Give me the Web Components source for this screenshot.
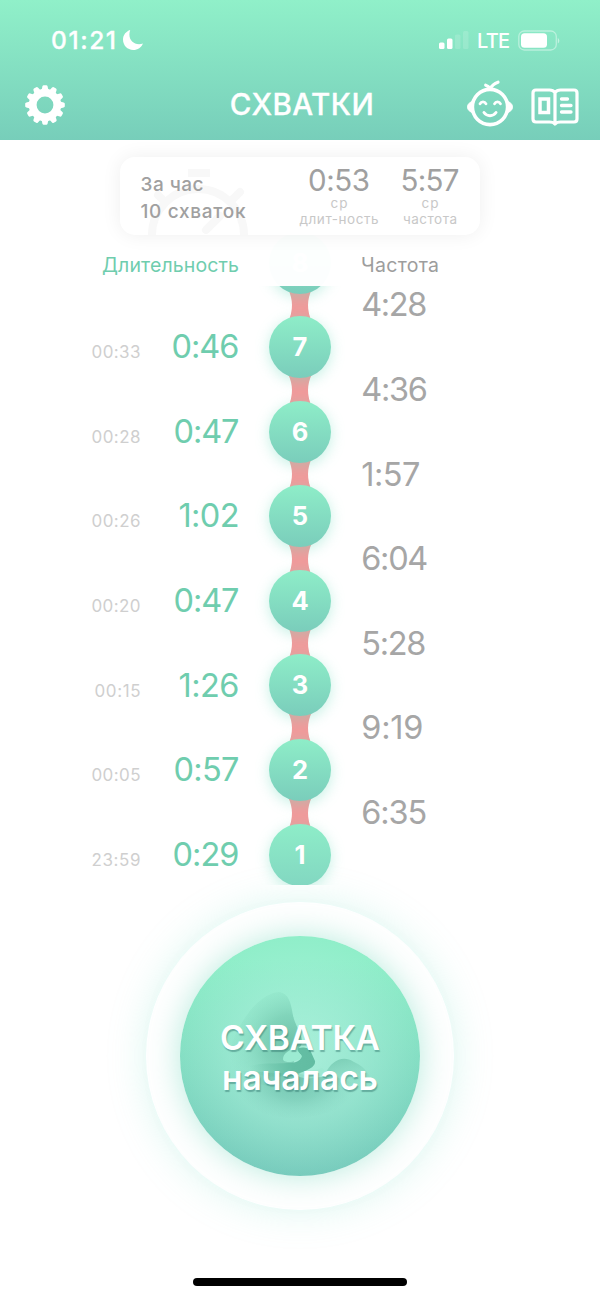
<!DOCTYPE html>
<html lang="ru">
<head>
<meta charset="utf-8">
<title>Схватки</title>
<style>
html,body{margin:0;background:#fff}
body{font-family:Inter,"Liberation Sans",sans-serif;width:600px;height:1297px;overflow:hidden}
</style>
</head>
<body>
<contraction-app></contraction-app>
<script>
const define = (name, html, setup) => {
  const tpl = document.createElement('template');
  tpl.innerHTML = html;
  customElements.define(name, class extends HTMLElement {
    constructor() {
      super();
      this.attachShadow({ mode: 'open' }).append(tpl.content.cloneNode(true));
    }
    connectedCallback() { if (setup) setup(this, this.shadowRoot); }
  });
};

/* Text whose tracking is adjusted to occupy a given width */
define('fit-text', `<style>:host{display:inline-block;white-space:nowrap}span{display:inline-block}</style><span><slot></slot></span>`,
  (host, root) => {
    const w = parseFloat(host.getAttribute('w'));
    const span = root.querySelector('span');
    const n = host.textContent.length;
    const gap = (w - span.getBoundingClientRect().width) / (n - 1);
    span.style.letterSpacing = gap + 'px';
    span.style.marginRight = -gap + 'px';
  });

define('status-bar', `<style>
:host{display:flex;justify-content:space-between;align-items:center;height:80px;padding:0 40px 0 51px;box-sizing:border-box;color:#fff}
div{display:flex;align-items:center}
.clock{font-size:24.500px;font-weight:500;line-height:30px;-webkit-text-stroke:.3px #fff}
.lte{font-size:20px;font-weight:500;line-height:24px;padding-top:1px}
</style>
<div><fit-text class="clock" w="65">01:21</fit-text>
<svg width="22" height="22" viewBox="0 0 22 22" style="margin-left:6px"><path d="M8.2 1C4 2.3 1 6 1 10.6 1 16.500 5.500 21 11.200 21c4.600 0 8.200-2.600 9.700-6.500-1.200.5-2.500.7-3.800.7C11.500 15.200 7.400 11.300 7.400 5.600c0-1.700.3-3.300.8-4.600z" fill="#fff"/></svg></div>
<div><svg width="30" height="20" viewBox="0 0 30 20" fill="#fff"><rect y="12.500" width="5.500" height="6.500" rx="1.500"/><rect x="8" y="8.500" width="5.500" height="10.500" rx="1.500"/><rect x="16" y="4.500" width="5.500" height="14.500" rx="1.500" opacity=".15"/><rect x="24" y="1" width="5.500" height="18" rx="1.500" opacity=".15"/></svg>
<fit-text class="lte" w="33" style="margin:0 8px 0 8px">LTE</fit-text>
<svg width="42" height="21" viewBox="0 0 42 21"><rect x=".8" y="1" width="37.500" height="19" rx="5.500" fill="none" stroke="#fff" stroke-opacity=".42" stroke-width="1.300"/><rect x="3" y="3.300" width="26" height="14.400" rx="3.500" fill="#fff"/><path d="M39.800 8v5.500c2-1 2-4.500 0-5.500z" fill="#fff" opacity=".5"/></svg></div>`);

define('gear-icon', `<style>:host{display:block;width:40px;height:40px}svg{display:block}</style>
<svg width="40" height="40" viewBox="-20 -20 40 40"><g fill="#fff"></g><circle r="12.300" fill="none" stroke="#fff" stroke-width="7.800"/></svg>`,
  (host, root) => {
    let s = '';
    for (let i = 0; i < 12; i++) s += `<path d="M-3.400-15L-2.600-18.600Q-2.300-19.800-1.300-19.800H1.300Q2.300-19.800 2.600-18.600L3.400-15Z" transform="rotate(${i * 30})"/>`;
    root.querySelector('g').innerHTML = s;
  });

define('baby-icon', `<style>:host{display:block}svg{display:block}</style>
<svg width="46" height="48" viewBox="0 0 46 48" fill="none" stroke="#fff" stroke-linecap="round" stroke-linejoin="round">
<circle cx="23" cy="27" r="17.600" stroke-width="3.600"/>
<path d="M5 21.500C1.500 23 .5 25 .5 27s1 4 4.500 5.500zM41 21.500c3.500 1.500 4.500 3.500 4.500 5.500s-1 4-4.500 5.500z" fill="#fff"/>
<path d="M23 9C24.500 6 27 3.500 31 2.200M23 8.500C21.800 6.500 20.500 5.700 18.700 5.200" stroke-width="3.200"/>
<path d="M13 23.800c1.300-2.600 4.700-2.600 6 0M27.500 23.800c1.300-2.600 4.700-2.600 6 0" stroke-width="2.800"/>
<path d="M17 32.500c3 4.200 9 4.200 12 0" stroke-width="3"/></svg>`);

define('book-icon', `<style>:host{display:block}svg{display:block}</style>
<svg width="48" height="38" viewBox="0 0 48 38" fill="none" stroke="#fff" stroke-linecap="round" stroke-linejoin="round">
<path d="M24 4.500C22.500 2.500 20.500 2 18.500 2H5Q2 2 2 5v26q0 3 3 3h13.500c2.500 0 4.500.6 5.500 2 1-1.400 3-2 5.500-2H43q3 0 3-3V5q0-3-3-3H29.500C27.500 2 25.500 2.500 24 4.500V35" stroke-width="3.200"/>
<rect x="9" y="11" width="8.500" height="13.500" stroke-width="3.500" stroke-linejoin="miter"/>
<path d="M30.500 11h6M30.500 17.500h9.500M30.500 24h9.500" stroke-width="3.300"/></svg>`);

define('nav-bar', `<style>
:host{display:grid;grid-template-columns:1fr auto 1fr;align-items:start;height:60px;padding:0 21px 0 24.500px;box-sizing:border-box;color:#fff}
h1{margin:6px 0 0;font-size:29.500px;line-height:36px;font-weight:500;-webkit-text-stroke:.3px #fff}
.right{display:flex;justify-content:flex-end;gap:18px}
gear-icon{margin-top:5px}book-icon{margin-top:7.500px}
</style><gear-icon></gear-icon><h1><fit-text w="144">СХВАТКИ</fit-text></h1><div class="right"><baby-icon></baby-icon><book-icon></book-icon></div>`);

define('summary-card', `<style>
:host{position:relative;display:flex;width:360px;height:78px;margin:17px auto 0;border-radius:15px;background:#fff;box-shadow:0 0 20px rgba(0,0,0,.065);color:#a0a0a0}
.watch{position:absolute;left:24px;top:10px}
.total{position:relative;width:176px;padding:14px 0 0 20.500px;box-sizing:border-box;font-size:19px;line-height:27px;font-weight:500}
.total fit-text{display:block}
.stat{position:relative;display:flex;flex-direction:column;align-items:center;padding-top:8px}
.num{font-size:29.500px;line-height:31px;font-weight:400}
.cap{font-size:13.500px;line-height:16px;color:#c8c8c8}
.cap.a{line-height:15px}
.d{width:86px}.f{width:96px}
</style>
<svg class="watch" width="112" height="68" viewBox="0 0 112 68" fill="none" stroke="#f8f8f8" stroke-width="8" stroke-linecap="round"><path d="M44 6h22" stroke-linecap="butt"/><path d="M8 68A44 44 0 0 1 100 68M18 32l-4-4M86 35l10-10M62 63l14-14"/></svg>
<div class="total"><fit-text w="63">За час</fit-text><fit-text w="105">10 схваток</fit-text></div>
<div class="stat d"><fit-text class="num" w="62">0:53</fit-text><fit-text class="cap a" w="17">ср</fit-text><fit-text class="cap" w="79">длит-ность</fit-text></div>
<div class="stat f"><fit-text class="num" w="59">5:57</fit-text><fit-text class="cap a" w="17">ср</fit-text><fit-text class="cap" w="54">частота</fit-text></div>`);

define('column-heads', `<style>
:host{display:grid;grid-template-columns:239px 121px 1fr;height:51px;padding-top:4px;box-sizing:border-box;background:rgba(255,255,255,.975);font-size:19.500px;line-height:52px}
.l{justify-self:end;color:#6fcdae}.r{grid-column:3;color:#9d9d9d;padding-left:1px}
</style><fit-text class="l" w="137">Длительность</fit-text><fit-text class="r" w="78">Частота</fit-text>`);

define('duration-row', `<style>
:host{display:grid;grid-template-columns:140.500px 99px;height:84.600px;align-items:baseline;line-height:84.600px;text-align:right}
.s{font-size:17px;color:#cfcfcf}.t{font-size:32.500px;color:#6fcdae}
</style><div class="s"></div><div class="t"></div>`,
  (h, r) => {
    const [stamp, time, w, sw] = h.getAttribute('value').split(' ');
    r.querySelector('.s').innerHTML = `<fit-text w="${sw}">${stamp}</fit-text>`;
    r.querySelector('.t').innerHTML = `<fit-text w="${w}">${time}</fit-text>`;
  });

define('count-node', `<style>
:host{display:flex;flex-direction:column;align-items:center;height:84.600px}
.ball{position:relative;z-index:1;width:62px;height:62px;flex:none;border-radius:50%;background:linear-gradient(#8eedc8,#7acdbb);box-shadow:0 3px 14px rgba(112,220,190,.4);color:#fff;font-size:25.500px;font-weight:700;line-height:61px;text-align:center}
svg{display:block;flex:none;margin-top:-4.500px}
:host([last]) svg{display:none}
:host([last]) .ball{background:linear-gradient(#8eedc8,#82d7c1)}
</style><div class="ball"><slot></slot></div>
<svg width="28" height="33" viewBox="0 0 28 33"><path d="M2 0Q10 16 2 33H26Q18 16 26 0Z" fill="#f29a9b"/></svg>`);

define('contraction-list', `<style>
:host{display:grid;grid-template-columns:240px 120px 1fr;height:650px;overflow:hidden;align-items:start;box-sizing:border-box}
.mid{margin-top:-3.500px}
.left{padding-top:70.200px}
.right{padding-top:28.400px;font-size:32.500px;line-height:84.600px;color:#a6a6a6}
.right fit-text{display:block;margin-left:1.300px}
</style><div class="left"></div><div class="mid"></div><div class="right"></div>`,
  (h, r) => {
    r.querySelector('.left').innerHTML = [['00:33','0:46',68,49],['00:28','0:47',66,49],['00:26','1:02',61,49],['00:20','0:47',66,49],['00:15','1:26',61,46],['00:05','0:57',66,49],['23:59','0:29',67,49]]
      .map(v => `<duration-row value="${v.join(' ')}"></duration-row>`).join('');
    r.querySelector('.mid').innerHTML = [8,7,6,5,4,3,2,1].map(n => `<count-node${n === 1 ? ' last' : ''}>${n}</count-node>`).join('');
    r.querySelector('.right').innerHTML = [['4:28',66],['4:36',66.5],['1:57',59],['6:04',67],['5:28',65],['9:19',62],['6:35',66]]
      .map(([t, w]) => `<fit-text w="${w}">${t}</fit-text>`).join('');
  });

define('start-button', `<style>
:host{display:grid;place-items:center;width:308px;height:308px;margin:17px auto 0;border-radius:50%;background:#fff;box-shadow:0 0 38px rgba(126,228,200,.28)}
.disc{display:grid;width:240px;height:240px;border-radius:50%;overflow:hidden;background:radial-gradient(circle at 50% 50%,rgba(190,248,231,.65),rgba(175,242,223,.42) 42%,rgba(255,255,255,0) 74%),linear-gradient(#8eeec8 10%,#75c9bb)}
.glow{border-radius:50%;box-shadow:0 0 32px rgba(112,215,187,.5)}
svg,.text{grid-area:1/1}
.text{position:relative;align-self:center;text-align:center;color:#fff;font-size:33.500px;line-height:40px;font-weight:600;text-shadow:1px 2px 1px rgba(45,110,105,.45);padding-top:4px}
.text fit-text{display:block;width:max-content;margin:0 auto}
</style><div class="glow"><div class="disc">
<svg width="240" height="240" viewBox="0 0 240 240"><defs>
<radialGradient id="a" gradientUnits="userSpaceOnUse" cx="112" cy="108" r="64"><stop stop-color="#55ad94" stop-opacity=".7"/><stop offset=".45" stop-color="#62bba0" stop-opacity=".5"/><stop offset="1" stop-color="#7cd3b8" stop-opacity="0"/></radialGradient>
<radialGradient id="b" gradientUnits="userSpaceOnUse" cx="116" cy="144" r="62" gradientTransform="translate(0 50) scale(1 .65)"><stop stop-color="#55ad98" stop-opacity=".65"/><stop offset=".5" stop-color="#63b8a3" stop-opacity=".42"/><stop offset="1" stop-color="#79cbb8" stop-opacity="0"/></radialGradient>
<linearGradient id="c" x1="0" y1="0" x2=".5" y2="1"><stop stop-color="#66bda4" stop-opacity=".7"/><stop offset="1" stop-color="#7bcdb7" stop-opacity=".03"/></linearGradient>
<linearGradient id="d" gradientUnits="userSpaceOnUse" x1="135" y1="0" x2="70" y2="0"><stop stop-color="#62bca2"/><stop offset=".35" stop-color="#64bea4"/><stop offset="1" stop-color="#6fc7ad" stop-opacity="0"/></linearGradient></defs>
<path d="M44 140C48 100 74 58 99 56C113 58 111 77 115 86C119 96 126 106 119 112L112 131L88 150Z" fill="url(#a)"/>
<path d="M52 134C72 135 94 138 118 137C134 142 141 143 151 138C162 145 175 145 184 154C160 186 88 192 60 164Z" fill="url(#b)"/>
<path d="M145 138C152 124 163 119 174 126C185 131 191 139 192 149C178 158 158 154 145 138Z" fill="url(#c)"/>
<path d="M116 114C117 111 129 110 131 116L135 125C136 131 127 134 120 137C98 143 82 142 62 132C80 126 94 128 107 127C116 127 122 125 121 119Z" fill="url(#d)"/>
<path d="M103 123C103 117 110 114 118 110C115 117 125 119 121 122C117 126 103 128 103 123Z" fill="#9cebd2"/>
<path d="M117 140C123 134 132 136 142 132C150 137 132 147 117 140Z" fill="#9ce8d1" opacity=".7"/>
</svg>
<div class="text"><fit-text w="160">СХВАТКА</fit-text><fit-text class="small" w="156">началась</fit-text></div>
</div></div>`);

define('contraction-app', `<style>
:host{display:flex;flex-direction:column;width:600px;height:1297px;background:#fff;overflow:hidden}
header{height:140px;flex:none;background:linear-gradient(#90f0c9,#77ceba)}
.log{display:grid;flex:none}
.log>*{grid-area:1/1}
column-heads{position:relative;z-index:10;align-self:start}
start-button,summary-card{flex:none}
summary-card{z-index:11}
.home{width:214px;height:8px;border-radius:4px;background:#000;margin:auto auto 11px}
</style><header><status-bar></status-bar><nav-bar></nav-bar></header>
<summary-card></summary-card>
<div class="log"><contraction-list></contraction-list><column-heads></column-heads></div>
<start-button></start-button>
<div class="home"></div>`);
</script>
</body>
</html>
